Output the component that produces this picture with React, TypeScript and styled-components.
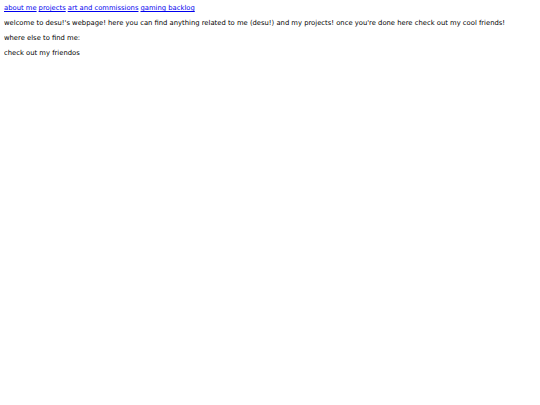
import styled, { createGlobalStyle } from "styled-components";

const GlobalStyle = createGlobalStyle`
  html, body {
    background: #ffffff;
  }
  body {
    margin: 4px;
    font-family: "DejaVu Sans", Verdana, sans-serif;
    font-size: 6.8px;
    line-height: 8px;
    color: #000000;
  }
`;

const Nav = styled.nav`
  display: flex;
  gap: 2px;
`;

const NavLink = styled.a`
  color: #0000ee;
  text-decoration: underline;
`;

const Para = styled.p`
  margin: 7px 0;
`;

export default function App() {
  return (
    <>
      <GlobalStyle />
      <Nav>
        <NavLink href="#about">about me</NavLink>
        <NavLink href="#projects">projects</NavLink>
        <NavLink href="#art">art and commissions</NavLink>
        <NavLink href="#backlog">gaming backlog</NavLink>
      </Nav>
      <Para>
        welcome to desu!'s webpage! here you can find anything related to me
        (desu!) and my projects! once you're done here check out my cool
        friends!
      </Para>
      <Para>where else to find me:</Para>
      <Para>check out my friendos</Para>
    </>
  );
}
